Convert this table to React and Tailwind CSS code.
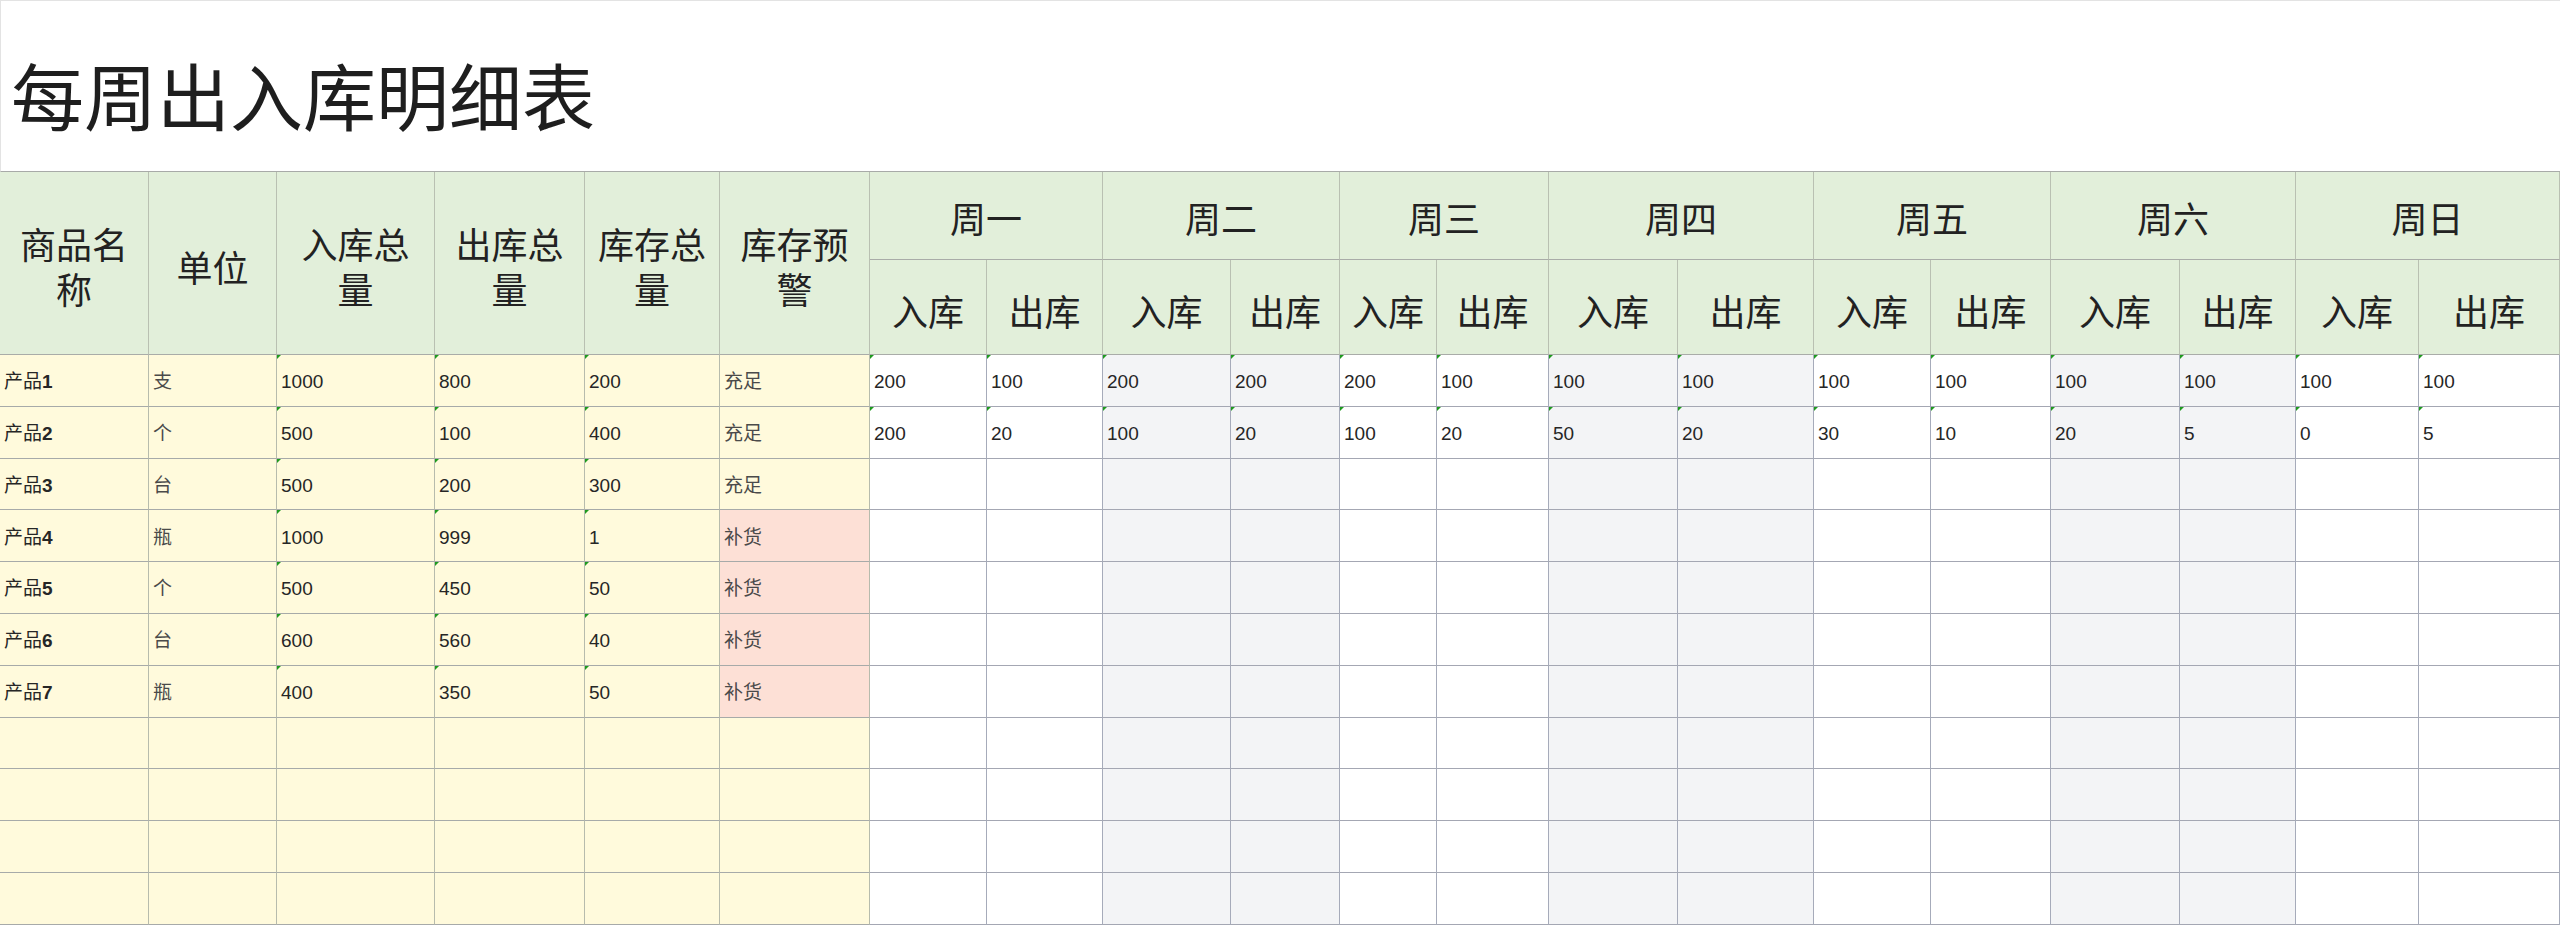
import React from "react";

const LEFT = [
  ["1", "支", "1000", "800", "200", "充足"],
  ["2", "个", "500", "100", "400", "充足"],
  ["3", "台", "500", "200", "300", "充足"],
  ["4", "瓶", "1000", "999", "1", "补货"],
  ["5", "个", "500", "450", "50", "补货"],
  ["6", "台", "600", "560", "40", "补货"],
  ["7", "瓶", "400", "350", "50", "补货"],
];

const WEEK = [
  ["200", "100", "200", "200", "200", "100", "100", "100", "100", "100", "100", "100", "100", "100"],
  ["200", "20", "100", "20", "100", "20", "50", "20", "30", "10", "20", "5", "0", "5"],
];

const DAYS = ["周一", "周二", "周三", "周四", "周五", "周六", "周日"];

const HEADS = [
  ["商品名", "称"],
  ["单位"],
  ["入库总", "量"],
  ["出库总", "量"],
  ["库存总", "量"],
  ["库存预", "警"],
];

function Tick() {
  return (
    <span className="absolute left-0 top-0 h-0 w-0 border-t-[4px] border-r-[4px] border-t-[#1f9a1f] border-r-transparent" />
  );
}

const hdr =
  "flex flex-col items-center justify-center text-center text-[36px] leading-[45px] text-[#222] bg-[#e2efda] border-r border-b border-r-[#b9c0b2] border-b-[#a9aca8] font-['Noto_Sans_CJK_SC',sans-serif]";

export default function App() {
  const rows = [];
  for (let r = 0; r < 11; r++) {
    const d = LEFT[r];
    for (let c = 0; c < 6; c++) {
      const pink = d && c === 5 && d[5] === "补货";
      let content = null;
      if (d) {
        if (c === 0) {
          content = (
            <span>
              产品<span className="font-bold">{d[0]}</span>
            </span>
          );
        } else if (c === 1 || c === 5) {
          content = <span className="text-[#4a4a4a]">{d[c]}</span>;
        } else {
          content = d[c];
        }
      }
      rows.push(
        <div
          key={`l${r}-${c}`}
          className={`relative flex items-center pl-[4px] pt-[4px] border-r border-b border-r-[#b7bbad] border-b-[#a7aaa9] ${
            pink ? "bg-[#fde0d6]" : "bg-[#fffadc]"
          }`}
        >
          {d && c >= 2 && c <= 4 ? <Tick /> : null}
          {content}
        </div>
      );
    }
    for (let c = 0; c < 14; c++) {
      const day = Math.floor(c / 2);
      const gray = day % 2 === 1;
      const v = WEEK[r] ? WEEK[r][c] : null;
      rows.push(
        <div
          key={`w${r}-${c}`}
          className={`relative flex items-center pl-[4px] pt-[4px] border-r border-b border-r-[#a6abba] border-b-[#a4a7b3] ${
            gray ? "bg-[#f3f4f6]" : "bg-white"
          }`}
        >
          {v !== null ? <Tick /> : null}
          {v}
        </div>
      );
    }
  }

  return (
    <div className="w-[2560px] h-[925px] overflow-hidden bg-white text-[#262626] font-['Liberation_Sans','Noto_Sans_CJK_SC',sans-serif]">
      <div className="h-[172px] flex items-center pl-[10px] pt-[14px] border-t border-l border-[#e3e3e3] border-b border-b-[#a8aaa8]">
        <h1 className="text-[73px] leading-none font-normal text-[#1e1e1e] font-['Noto_Sans_CJK_SC',sans-serif]">
          每周出入库明细表
        </h1>
      </div>
      <div className="grid grid-cols-[149px_128px_158px_150px_135px_150px_117px_116px_128px_109px_97px_112px_129px_136px_117px_120px_129px_116px_123px_141px] grid-rows-[88px_95px_repeat(11,51.8px)] text-[19px]">
        {HEADS.map((lines, i) => (
          <div key={`h${i}`} className={`${hdr} row-span-2 pt-[6px]`}>
            {lines.map((t) => (
              <span key={t} className="block">
                {t}
              </span>
            ))}
          </div>
        ))}
        {DAYS.map((d) => (
          <div key={d} className={`${hdr} col-span-2 pt-[4px]`}>
            {d}
          </div>
        ))}
        {DAYS.map((d) => (
          <React.Fragment key={`s${d}`}>
            <div className={`${hdr} pt-[6px]`}>入库</div>
            <div className={`${hdr} pt-[6px]`}>出库</div>
          </React.Fragment>
        ))}
        {rows}
      </div>
    </div>
  );
}
